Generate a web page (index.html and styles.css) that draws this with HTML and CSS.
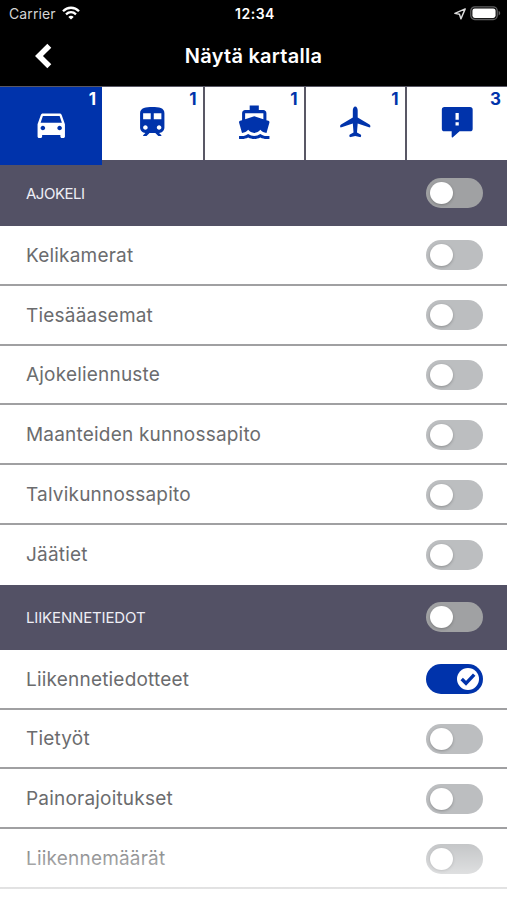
FILE: index.html
```html
<!DOCTYPE html>
<html lang="fi">
  <head>
    <meta charset="UTF-8" />
    <meta name="viewport" content="width=device-width, initial-scale=1" />
    <title>Näytä kartalla</title>
    <link rel="stylesheet" href="styles.css">
  </head>
  <body>
    <div class="statusbar">
      <div class="carrier">
        <span>Carrier</span>
        <svg class="wifi" width="18" height="14" viewBox="0 0 18 14" fill="none" stroke="#fff" stroke-width="2.3">
          <path d="M1 5.2C5.5.6 12.500.6 17 5.2" />
          <path d="M4 8.300C7 5.500 11 5.500 14 8.300" />
          <path d="M9 13.600L6.300 10.900C7.800 9.500 10.200 9.500 11.700 10.900Z" fill="#fff" stroke="none" />
        </svg>
      </div>
      <div class="clock">12:34</div>
      <div class="power">
        <svg width="12" height="12" viewBox="0 0 12 12" fill="none" stroke="#ddd" stroke-width="1.4" stroke-linejoin="round">
          <path d="M11.200.9L.9 5.400L5.500 6.200L6.900 10.900Z" />
        </svg>
        <svg width="31" height="15" viewBox="0 0 31 15">
          <rect x=".8" y=".9" width="26.400" height="12.600" rx="4" fill="none" stroke="#606062" stroke-width="1.300" />
          <rect x="2.400" y="2.500" width="23.200" height="9.400" rx="2.300" fill="#fff" />
          <path d="M28.600 5v4.400c1-.3 1.600-1.200 1.600-2.200S29.600 5.300 28.600 5z" fill="#606062" />
        </svg>
      </div>
    </div>
    <header>
      <svg class="back" width="18" height="26" viewBox="0 0 18 26" fill="none" stroke="#fff" stroke-width="5.600">
        <path d="M15.300 2.800L5 13L15.300 23.200" />
      </svg>
      <h1>Näytä kartalla</h1>
    </header>

    <nav class="tabs">
      <div class="tab active">
        <svg class="icon" viewBox="0 0 24 24"><path d="M18.920 6.010C18.720 5.420 18.160 5 17.500 5h-11c-.66 0-1.210.42-1.420 1.010L3 12v8c0 .55.45 1 1 1h1c.55 0 1-.45 1-1v-1h12v1c0 .55.45 1 1 1h1c.55 0 1-.45 1-1v-8l-2.080-5.990zM6.500 16c-.83 0-1.500-.67-1.500-1.500S5.670 13 6.500 13s1.500.67 1.500 1.500S7.330 16 6.500 16zm11 0c-.83 0-1.500-.67-1.500-1.500s.67-1.500 1.500-1.500 1.500.67 1.500 1.500-.67 1.500-1.500 1.500zM5 11l1.500-4.500h11L19 11H5z" /></svg>
        <span class="count">1</span>
      </div>
      <div class="tab">
        <svg class="icon" viewBox="0 0 24 24"><path d="M12 2c-4 0-8 .5-8 4v9.500C4 17.430 5.570 19 7.500 19L6 20.500v.5h2.230l2-2H14l2 2h2v-.5L16.500 19c1.930 0 3.500-1.570 3.500-3.500V6c0-3.500-3.580-4-8-4zM7.500 17c-.83 0-1.500-.67-1.500-1.500S6.670 14 7.500 14s1.500.67 1.500 1.500S8.330 17 7.500 17zm3.500-7H6V6h5v4zm2 0V6h5v4h-5zm3.500 7c-.83 0-1.500-.67-1.500-1.500s.67-1.500 1.500-1.500 1.500.67 1.500 1.500-.67 1.500-1.500 1.500z" /></svg>
        <span class="count">1</span>
      </div>
      <div class="tab">
        <svg class="icon" viewBox="0 0 24 24"><path d="M20 21c-1.390 0-2.780-.47-4-1.320-2.440 1.710-5.560 1.710-8 0C6.780 20.530 5.390 21 4 21H2v2h2c1.380 0 2.740-.35 4-.99 2.520 1.290 5.480 1.290 8 0 1.260.65 2.620.99 4 .99h2v-2h-2zM3.950 19H4c1.600 0 3.020-.88 4-2 .98 1.120 2.400 2 4 2s3.020-.88 4-2c.98 1.120 2.400 2 4 2h.05l1.890-6.680c.08-.26.06-.54-.06-.78s-.34-.42-.6-.5L20 10.620V6c0-1.100-.9-2-2-2h-3V1H9v3H6c-1.100 0-2 .9-2 2v4.620l-1.290.42c-.26.08-.48.26-.6.5s-.15.52-.06.78L3.950 19zM6 6h12v3.970L12 8 6 9.970V6z" /></svg>
        <span class="count">1</span>
      </div>
      <div class="tab">
        <svg class="icon" viewBox="0 0 36 36"><path d="M18 2.500C16.600 2.500 15.600 4.400 15.600 6.500V13.300L4 20.200C3.200 20.700 3 21.400 3.100 22.300C3.200 23.200 3.700 23.300 4.500 23L15.600 19.300L16.300 28L12.700 30.200C12 30.700 12 32.400 12.700 32.600C13 32.700 13.300 32.700 13.700 32.600L18 31.600L22.300 32.600C22.700 32.700 23 32.700 23.300 32.600C24 32.400 24 30.700 23.300 30.200L19.700 28L20.400 19.300L31.500 23C32.300 23.300 32.800 23.200 32.900 22.300C33 21.400 32.800 20.700 32 20.200L20.400 13.300V6.500C20.400 4.400 19.400 2.500 18 2.500Z" /></svg>
        <span class="count">1</span>
      </div>
      <div class="tab">
        <svg class="icon" viewBox="0 0 36 36"><path fill-rule="evenodd" d="M5.400 2.900H30.600Q33.200 2.900 33.200 5.500V24.300Q33.200 26.900 30.600 26.900H20.300L13.700 32.900Q12.500 33.600 12.500 32.100V26.900H5.400Q2.800 26.900 2.800 24.300V5.500Q2.800 2.900 5.400 2.900ZM16.300 8.800V15.600H19.500V8.800ZM16.300 18V21.200H19.500V18Z" /></svg>
        <span class="count">3</span>
      </div>
    </nav>

    <main>
      <h2 class="section first"><span>AJOKELI</span><i class="switch"></i></h2>
      <ul>
        <li><span>Kelikamerat</span><i class="switch"></i></li>
        <li><span>Tiesääasemat</span><i class="switch"></i></li>
        <li><span>Ajokeliennuste</span><i class="switch"></i></li>
        <li><span>Maanteiden kunnossapito</span><i class="switch"></i></li>
        <li><span>Talvikunnossapito</span><i class="switch"></i></li>
        <li><span>Jäätiet</span><i class="switch"></i></li>
      </ul>
      <h2 class="section"><span>LIIKENNETIEDOT</span><i class="switch"></i></h2>
      <ul>
        <li><span>Liikennetiedotteet</span>
          <i class="switch on">
            <svg width="22" height="22" viewBox="0 0 22 22"><circle cx="11" cy="11" r="11" fill="#fff" /><path d="M4.700 11L9 15.300L17.200 6.600" fill="none" stroke="#0033ab" stroke-width="3.400" /></svg>
          </i>
        </li>
        <li><span>Tietyöt</span><i class="switch"></i></li>
        <li><span>Painorajoitukset</span><i class="switch"></i></li>
        <li><span>Liikennemäärät</span><i class="switch"></i></li>
      </ul>
    </main>
    <div class="fade"></div>
  </body>
</html>
```
FILE: styles.css
```css
* {
  box-sizing: border-box;
}
body {
  margin: 0;
  height: 900px;
  overflow: hidden;
  position: relative;
  background: #fff;
  font-family: Inter, "Liberation Sans", sans-serif;
}
svg {
  display: block;
}

/* top bars */
.statusbar {
  display: grid;
  grid-template-columns: 1fr auto 1fr;
  align-items: center;
  height: 27px;
  padding: 0 6px 0 9px;
  background: #000;
  color: #fff;
  font-size: 14px;
}
.carrier {
  display: flex;
  align-items: center;
  gap: 6px;
  color: #d4d4d4;
  letter-spacing: 0.1px;
}
.wifi {
  margin-top: -2px;
}
.clock {
  font-weight: 600;
  font-size: 14px;
  letter-spacing: 0.5px;
}
.power {
  display: flex;
  justify-content: flex-end;
  align-items: center;
  gap: 4px;
}
header {
  display: grid;
  grid-template-columns: 60px 1fr 60px;
  align-items: center;
  height: 59px;
  padding-bottom: 2px;
  background: #000;
  color: #fff;
}
header h1 {
  margin: 0;
  font-size: 20px;
  font-weight: 600;
  letter-spacing: 0.25px;
  text-align: center;
}
.back {
  margin-left: 34px;
}

/* tabs */
.tabs {
  display: grid;
  grid-template-columns: 102px 102.500px 101px 101px 1fr;
  height: 74px;
  padding-top: 1px;
  background: #595865;
}
.tab {
  position: relative;
  display: flex;
  justify-content: center;
  align-items: center;
  height: 73px;
  padding-bottom: 3px;
  border-right: 2px solid #595865;
  background: #fff;
  color: #0033ab;
}
.tab:last-child {
  border: 0;
}
.tab.active {
  z-index: 1;
  height: 78px;
  border: 0;
  background: #0033ab;
  color: #fff;
}
.icon {
  width: 36.500px;
  height: 36.500px;
  fill: currentColor;
}
.count {
  position: absolute;
  top: 2px;
  right: 6px;
  font-size: 17px;
  line-height: 20px;
  font-weight: 700;
}

/* list */
.section {
  display: flex;
  justify-content: space-between;
  align-items: center;
  height: 65px;
  margin: 0;
  padding: 0 24px 0 26px;
  background: #535165;
  color: #eeeef5;
  font-size: 15px;
  font-weight: 400;
  letter-spacing: -0.15px;
}
.section.first {
  height: 66px;
  letter-spacing: -0.5px;
}
ul {
  list-style: none;
  margin: 0;
  padding: 0;
}
li {
  display: flex;
  justify-content: space-between;
  align-items: center;
  height: 59.800px;
  padding: 1px 24px 0 26px;
  border-bottom: 2px solid #a0a0a2;
  color: #6b6c6e;
  font-size: 19px;
  letter-spacing: 0.2px;
}
ul:first-of-type li:last-child {
  padding-top: 0;
  border: 0;
}
.switch {
  width: 57px;
  height: 30px;
  padding: 4px;
  border-radius: 15px;
  background: #bcbec0;
}
.switch::before {
  content: "";
  display: block;
  width: 23px;
  height: 22px;
  border-radius: 50%;
  background: #fff;
  box-shadow: 0 1px 3px rgba(0, 0, 0, 0.25);
}
.section .switch {
  background: #a0a1a3;
}
.switch.on {
  display: flex;
  justify-content: flex-end;
  background: #0033ab;
}
.switch.on::before {
  display: none;
}

/* list fades out at the bottom of the screen */
.fade {
  position: absolute;
  left: 0;
  right: 0;
  bottom: 0;
  height: 66px;
  background: linear-gradient(rgba(255, 255, 255, 0), rgba(255, 255, 255, 0.85));
}
```
